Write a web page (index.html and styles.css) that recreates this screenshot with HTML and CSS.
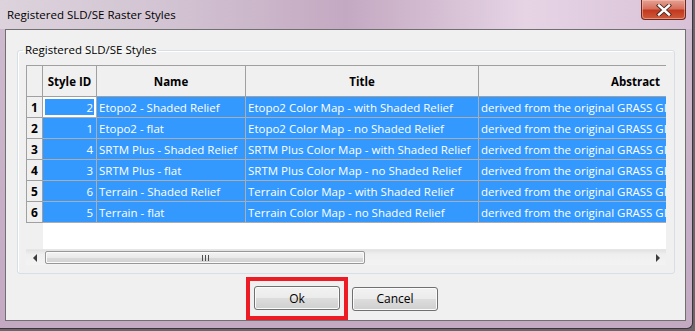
FILE: index.html
```html
<!DOCTYPE html>
<html lang="en">
  <head>
    <meta charset="UTF-8" />
    <title>Registered SLD/SE Raster Styles</title>
    <link rel="stylesheet" href="styles.css">
  </head>
  <body>
    <div class="window">
      <div class="titlebar">
        <span class="title">Registered SLD/SE Raster Styles</span>
        <div class="close-btn">
          <svg width="16" height="12" viewBox="0 0 16 12">
            <path d="M3 1.5 L13 10.5 M13 1.5 L3 10.5" stroke="#4a2a24" stroke-width="4.2" stroke-linecap="square"/>
            <path d="M3 1.5 L13 10.5 M13 1.5 L3 10.5" stroke="#ffffff" stroke-width="2.4" stroke-linecap="square"/>
          </svg>
        </div>
      </div>

      <div class="client">
        <fieldset class="group">
          <legend>Registered SLD/SE Styles</legend>

          <div class="table-view">
            <div class="grid">
              <div class="cell head corner"></div>
              <div class="cell head">Style ID</div>
              <div class="cell head">Name</div>
              <div class="cell head">Title</div>
              <div class="cell head">Abstract</div>

              <div class="cell rowhead">1</div>
              <div class="cell sel num focus">2</div>
              <div class="cell sel">Etopo2 - Shaded Relief</div>
              <div class="cell sel">Etopo2 Color Map - with Shaded Relief</div>
              <div class="cell sel">derived from the original GRASS GIS color table</div>

              <div class="cell rowhead">2</div>
              <div class="cell sel num">1</div>
              <div class="cell sel">Etopo2 - flat</div>
              <div class="cell sel">Etopo2 Color Map - no Shaded Relief</div>
              <div class="cell sel">derived from the original GRASS GIS color table</div>

              <div class="cell rowhead">3</div>
              <div class="cell sel num">4</div>
              <div class="cell sel">SRTM Plus - Shaded Relief</div>
              <div class="cell sel">SRTM Plus Color Map - with Shaded Relief</div>
              <div class="cell sel">derived from the original GRASS GIS color table</div>

              <div class="cell rowhead">4</div>
              <div class="cell sel num">3</div>
              <div class="cell sel">SRTM Plus - flat</div>
              <div class="cell sel">SRTM Plus Color Map - no Shaded Relief</div>
              <div class="cell sel">derived from the original GRASS GIS color table</div>

              <div class="cell rowhead">5</div>
              <div class="cell sel num">6</div>
              <div class="cell sel">Terrain - Shaded Relief</div>
              <div class="cell sel">Terrain Color Map - with Shaded Relief</div>
              <div class="cell sel">derived from the original GRASS GIS color table</div>

              <div class="cell rowhead">6</div>
              <div class="cell sel num">5</div>
              <div class="cell sel">Terrain - flat</div>
              <div class="cell sel">Terrain Color Map - no Shaded Relief</div>
              <div class="cell sel">derived from the original GRASS GIS color table</div>
            </div>

            <div class="empty-area"></div>

            <div class="hscroll">
              <div class="arrow left"></div>
              <div class="track">
                <div class="thumb"><span class="grip"></span></div>
              </div>
              <div class="arrow right"></div>
            </div>
          </div>
        </fieldset>

        <div class="buttons">
          <div class="highlight">
            <button class="btn">Ok</button>
          </div>
          <button class="btn">Cancel</button>
        </div>
      </div>
    </div>
  </body>
</html>
```

FILE: styles.css
```css
* {
  margin: 0;
  padding: 0;
  box-sizing: border-box;
}

body {
  width: 695px;
  height: 331px;
  overflow: hidden;
  background: #6a666b;
  font-family: "Open Sans", "Noto Sans", sans-serif;
  font-size: 11.5px;
  color: #000;
}

.window {
  width: 693px;
  height: 329px;
  border-right: 1px solid #3a363b;
  border-bottom: 1px solid #3a363b;
  border-bottom-right-radius: 6px;
  background: linear-gradient(180deg, #cfbccf 0%, #c7b0c7 60%, #c4a9c3 100%);
}

.titlebar {
  height: 29px;
  display: flex;
  align-items: flex-start;
  padding-left: 7px;
  background: linear-gradient(90deg, #dcd3dc 0%, #d2c3d2 25%, #c4a9c2 50%, #d3bcd1 62%, #e6d4e5 76%, #d9c2d7 100%);
}

.title {
  font-size: 11.5px;
  line-height: 16px;
  padding-top: 7px;
  color: #000;
}

.close-btn {
  margin-left: auto;
  margin-right: 6px;
  width: 45px;
  height: 20px;
  border: 1px solid #6b2a20;
  border-top: none;
  border-radius: 0 0 4px 4px;
  background: linear-gradient(180deg, #e4a294 0%, #d7705c 45%, #c2391f 55%, #cf5a3c 100%);
  display: flex;
  align-items: center;
  justify-content: center;
  box-shadow: inset 0 0 0 1px rgba(255, 200, 190, 0.5);
}

.client {
  margin-left: 5px;
  width: 681px;
  height: 292px;
  border: 1px solid #707070;
  background: #f0f0f0;
}

.group {
  margin: 11px 10px 0 11px;
  border: 1px solid #d5dfe5;
  border-radius: 3px;
  box-shadow: inset 1px 1px 0 #fff;
  padding: 6px 7px 8px 8px;
}

.group legend {
  margin-left: -3px;
  padding: 0 2px;
  font-size: 11.5px;
  line-height: 18px;
}

.table-view {
  width: 640px;
  overflow: hidden;
}

.grid {
  display: grid;
  grid-template-columns: 16px 54px 149px 233px 314px;
  grid-auto-rows: 21px;
  grid-template-rows: 31px;
  width: 767px;
  border-left: 1px solid #a0a0a0;
  border-top: 1px solid #a0a0a0;
}

.cell {
  border-right: 1px solid #adadad;
  border-bottom: 1px solid #adadad;
  white-space: nowrap;
  overflow: hidden;
  display: flex;
  align-items: center;
  padding: 0 2px;
}

.head {
  background: #f0f0f0;
  font-weight: bold;
  justify-content: center;
  border-color: #a0a0a0;
}

.rowhead {
  background: #f0f0f0;
  font-weight: bold;
  justify-content: center;
  padding: 0;
  font-size: 12px;
  border-color: #a0a0a0;
}

.sel {
  background: #3399ff;
  color: #fff;
}

.num {
  justify-content: flex-end;
  padding-right: 3px;
}

.focus {
  box-shadow: inset 0 0 0 2px #fff;
}

.empty-area {
  height: 26px;
  background: linear-gradient(90deg, #f0f0f0 17px, #fff 17px);
}

.hscroll {
  height: 16px;
  display: flex;
  background: linear-gradient(180deg, #e2e2e2 0%, #efefef 30%, #f3f3f3 100%);
  border-top: 1px solid #e6e6e6;
}

.arrow {
  width: 17px;
  display: flex;
  align-items: center;
  justify-content: center;
}

.arrow::before {
  content: "";
  border-top: 4px solid transparent;
  border-bottom: 4px solid transparent;
}

.arrow.left::before {
  border-right: 4px solid #3c3c3c;
}

.arrow.right {
  width: 16px;
}

.arrow.right::before {
  border-left: 4px solid #3c3c3c;
}

.track {
  flex: 1;
  padding: 1px 0 1px 2px;
}

.thumb {
  width: 320px;
  height: 13px;
  border: 1px solid #979797;
  border-radius: 2px;
  background: linear-gradient(180deg, #f3f3f3 0%, #e9e9e9 50%, #dadada 51%, #d2d2d2 100%);
  box-shadow: inset 0 0 0 1px #fafafa;
  display: flex;
  align-items: center;
  justify-content: center;
}

.grip {
  width: 7px;
  height: 6px;
  background: repeating-linear-gradient(90deg, #4e4e4e 0 1px, transparent 1px 3px);
}

.buttons {
  display: flex;
  align-items: center;
  gap: 4px;
  padding-left: 240px;
  margin-top: 3px;
}

.highlight {
  border: 4px solid #ed1c24;
  padding: 5px 4px 6px 4px;
}

.btn {
  width: 86px;
  height: 24px;
  font-family: "Open Sans", "Noto Sans", sans-serif;
  font-size: 12px;
  color: #000;
  border: 1px solid #707070;
  border-radius: 3px;
  background: linear-gradient(180deg, #f2f2f2 0%, #ebebeb 50%, #dddddd 51%, #cfcfcf 100%);
  box-shadow: inset 0 0 0 1px #fbfbfb;
}
```
